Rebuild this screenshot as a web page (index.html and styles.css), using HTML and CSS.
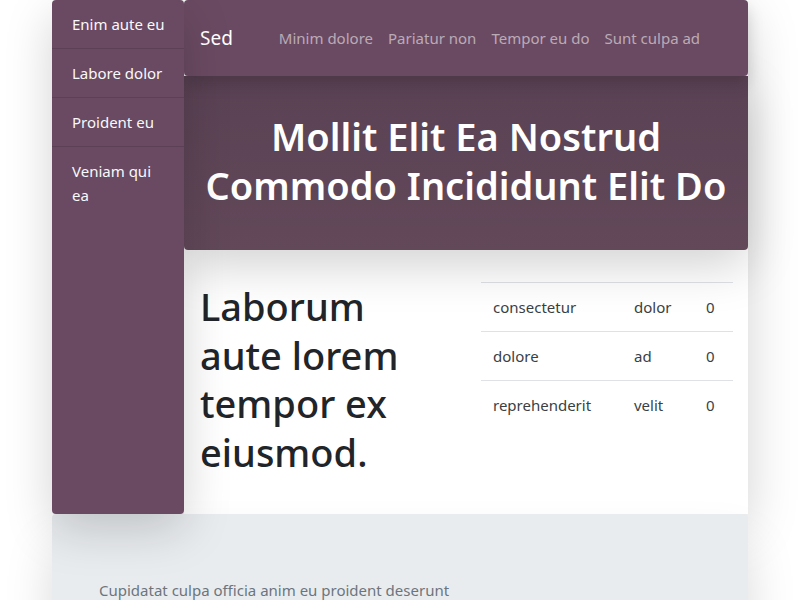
FILE: index.html
```html
<!DOCTYPE html>
<html lang="en">
<head>
<meta charset="utf-8">
<title>Sed</title>
<link rel="stylesheet" href="styles.css">
</head>
<body>
<div class="page">
  <div class="top">
    <aside class="sidebar">
      <a class="side-item" href="#">Enim aute eu</a>
      <a class="side-item" href="#">Labore dolor</a>
      <a class="side-item" href="#">Proident eu</a>
      <a class="side-item last" href="#">Veniam qui ea</a>
    </aside>
    <main class="main">
      <nav class="navbar">
        <a class="brand" href="#">Sed</a>
        <a class="nav-link" href="#">Minim dolore</a>
        <a class="nav-link" href="#">Pariatur non</a>
        <a class="nav-link" href="#">Tempor eu do</a>
        <a class="nav-link" href="#">Sunt culpa ad</a>
      </nav>
      <header class="hero">
        <h1 class="hero-title">Mollit Elit Ea Nostrud<br>Commodo Incididunt Elit Do</h1>
      </header>
      <section class="content">
        <div class="lead-col">
          <h2 class="lead-title">Laborum aute lorem tempor ex eiusmod.</h2>
        </div>
        <div class="table-col">
          <table class="data">
            <tbody>
              <tr><td class="c1">consectetur</td><td class="c2">dolor</td><td class="c3">0</td></tr>
              <tr><td class="c1">dolore</td><td class="c2">ad</td><td class="c3">0</td></tr>
              <tr><td class="c1">reprehenderit</td><td class="c2">velit</td><td class="c3">0</td></tr>
            </tbody>
          </table>
        </div>
      </section>
    </main>
  </div>
  <footer class="footer">
    <p class="footer-text">Cupidatat culpa officia anim eu proident deserunt</p>
  </footer>
</div>
</body>
</html>
```

FILE: styles.css
```css
* { box-sizing: border-box; }
html, body { margin: 0; padding: 0; background: #fff; }
body {
  font-family: "Noto Sans", "Open Sans", sans-serif;
  font-size: 15px;
  line-height: 1.5;
  color: #212529;
  overflow: hidden;
}
a { text-decoration: none; }

.page {
  width: 696px;
  margin: 0 auto;
}
.top {
  display: flex;
  align-items: flex-start;
}

/* sidebar */
.sidebar {
  position: relative;
  z-index: 3;
  width: 132px;
  height: 514px;
  flex: none;
  background: #6a4a62;
  border-radius: 4px;
  box-shadow: 0 16px 48px rgba(0, 0, 0, 0.175);
  display: flex;
  flex-direction: column;
}
.side-item {
  display: block;
  padding: 12px 16px 12px 20px;
  color: #f8f9fa;
  font-size: 15px;
  line-height: 24px;
  border-bottom: 1px solid rgba(0, 0, 0, 0.125);
}
.side-item.last { border-bottom: 0; padding-right: 20px; }

/* main column */
.main {
  flex: 1;
  display: flex;
  flex-direction: column;
  background: #fff;
  box-shadow: 0 16px 48px rgba(0, 0, 0, 0.175);
}
.navbar {
  position: relative;
  z-index: 2;
  height: 76px;
  background: #6a4a62;
  border-radius: 4px;
  display: flex;
  align-items: center;
  padding: 0 16px;
  box-shadow: 0 8px 16px rgba(0, 0, 0, 0.15);
}
.brand {
  color: #fff;
  font-size: 19px;
  line-height: 30px;
  margin-right: 38px;
  white-space: nowrap;
}
.nav-link {
  color: rgba(255, 255, 255, 0.55);
  font-size: 15px;
  line-height: 24px;
  padding: 0 8px;
  margin-right: -1px;
  white-space: nowrap;
}
.hero {
  position: relative;
  z-index: 1;
  height: 174px;
  padding-bottom: 4px;
  background: linear-gradient(#5a4254, #624859);
  border-radius: 0 0 4px 4px;
  box-shadow: 0 16px 48px rgba(0, 0, 0, 0.175);
  display: flex;
  align-items: center;
  justify-content: center;
}
.hero-title {
  margin: 0;
  color: #fff;
  text-align: center;
  font-size: 38px;
  line-height: 49px;
  font-weight: 600;
}
.content {
  height: 264px;
  display: flex;
  padding: 32px 15px 0 16px;
}
.lead-col {
  width: 230px;
  flex: none;
}
.lead-title {
  margin: 0;
  font-size: 38px;
  line-height: 48.5px;
  font-weight: 500;
  color: #212529;
}
.table-col {
  margin-left: 51px;
  width: 252px;
  flex: none;
}
.data {
  width: 252px;
  border-collapse: collapse;
  background: #fff;
  table-layout: fixed;
}
.data td {
  padding: 12px;
  line-height: 24px;
  font-size: 15px;
  color: #3a3f44;
  border-top: 1px solid #dee2e6;
  vertical-align: top;
  white-space: nowrap;
}
.data .c1 { width: 141px; }
.data .c2 { width: 72px; }
.data .c3 { width: 39px; }

/* footer */
.footer {
  position: relative;
  z-index: 1;
  background: #e9ecef;
  border-radius: 4px 4px 0 0;
  padding: 64px 47px 48px;
  box-shadow: 0 32px 48px rgba(0, 0, 0, 0.15);
}
.footer-text {
  margin: 0;
  color: #6c757d;
  font-size: 15px;
  line-height: 24px;
}
```
